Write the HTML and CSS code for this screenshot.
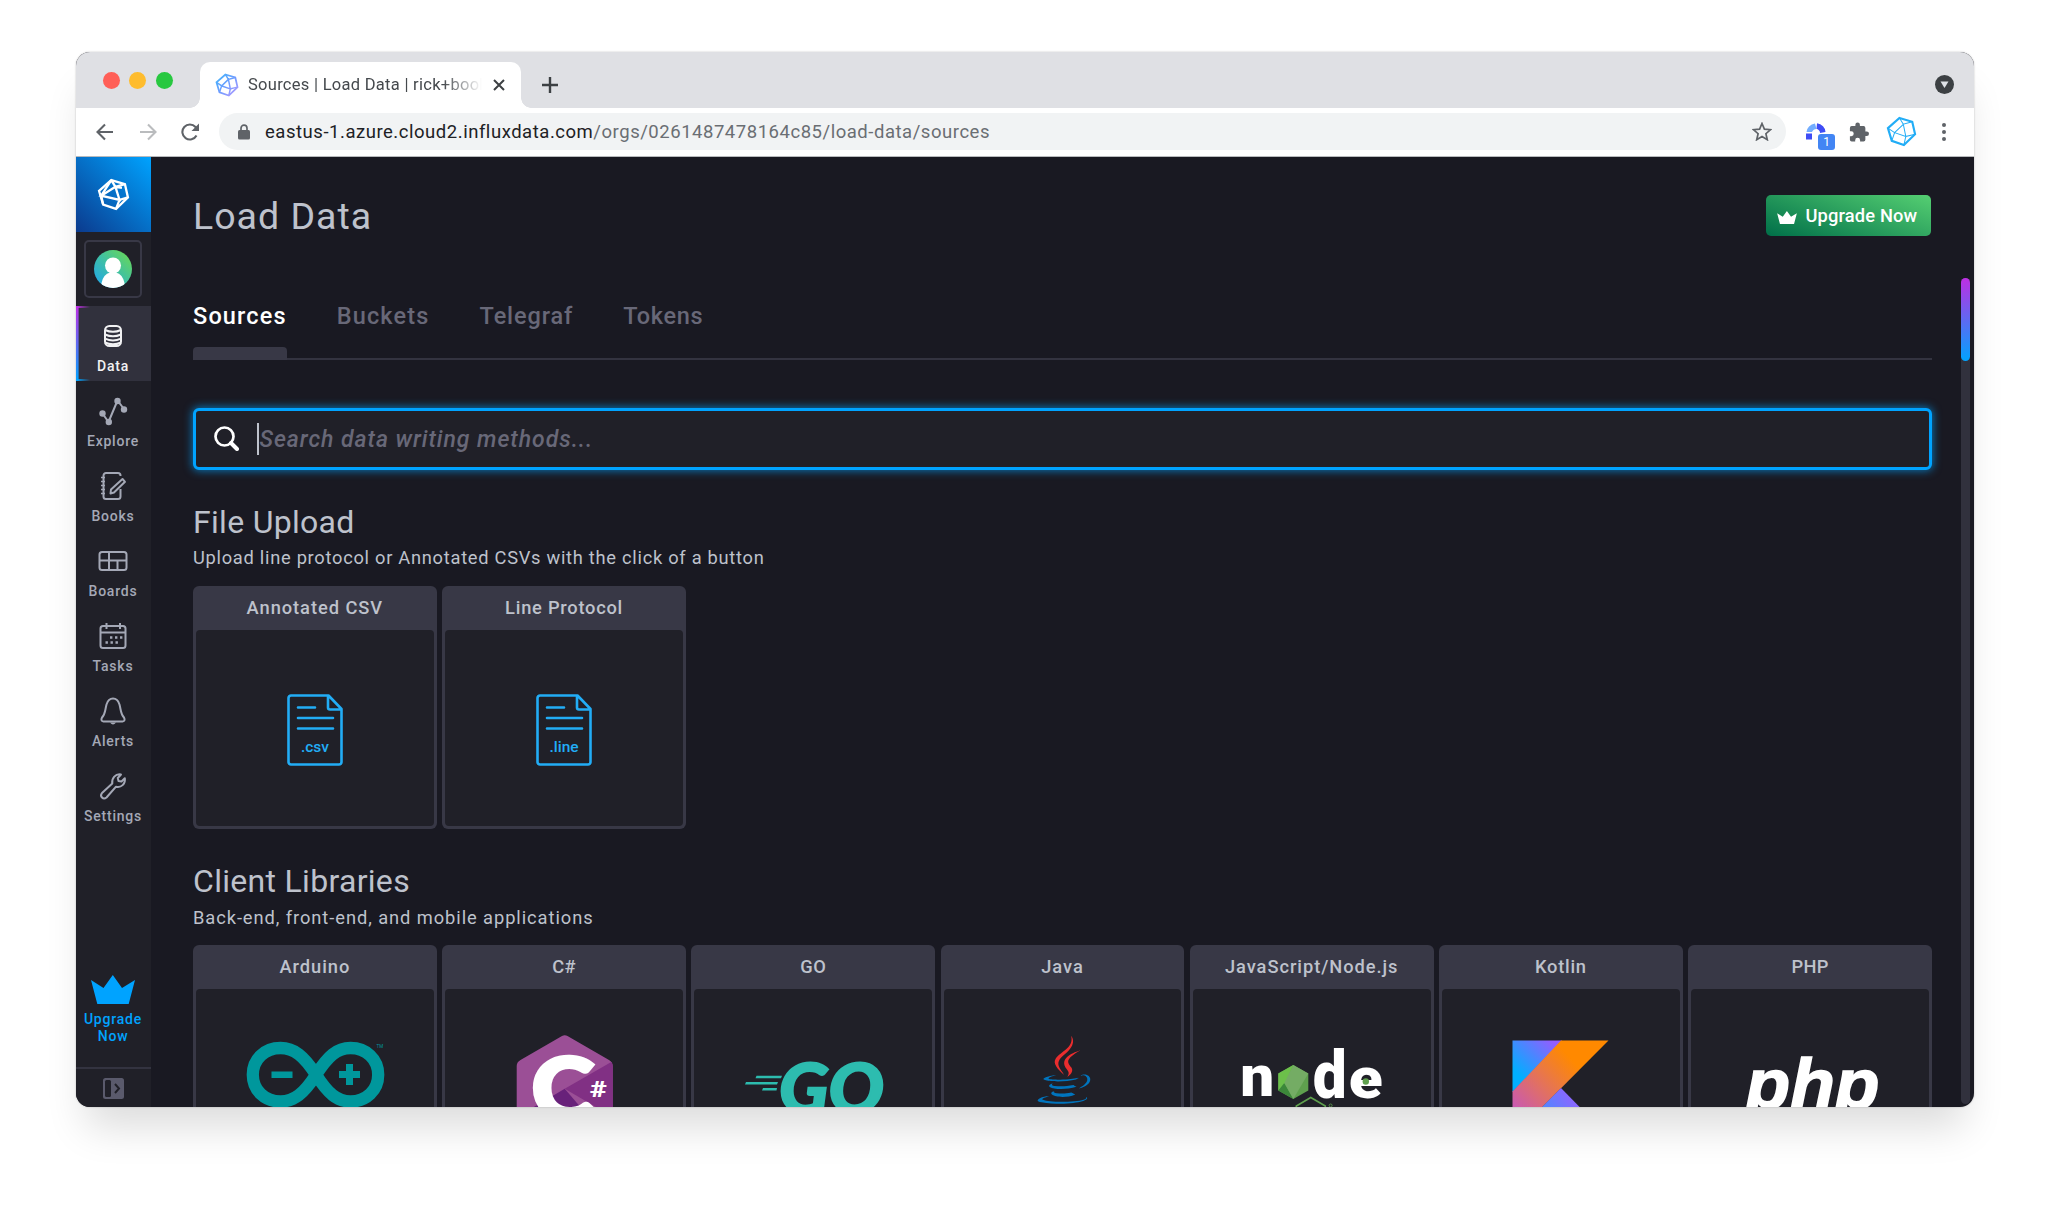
FILE: index.html
```html
<!DOCTYPE html>
<html lang="en">
<head>
<meta charset="utf-8">
<title>Sources | Load Data</title>
<link rel="stylesheet" href="styles.css">
</head>
<body>
<svg width="0" height="0" class="defs">
  <defs>
    <linearGradient id="fav" x1="0" y1="0" x2="1" y2="1"><stop offset="0" stop-color="#3fb6fb"/><stop offset=".5" stop-color="#6f9cff"/><stop offset="1" stop-color="#b79bff"/></linearGradient>
    <linearGradient id="avatar" x1="0" y1="1" x2="1" y2="0"><stop offset="0" stop-color="#1da4f2"/><stop offset=".5" stop-color="#3fc0a4"/><stop offset="1" stop-color="#6fdc4b"/></linearGradient>
    <symbol id="influx" viewBox="-1.7 -1.7 27.4 27.4">
      <path d="M10.2 0 21.5 3.4 24 14.4 14.1 24 3.4 20.3 0 9Z" class="outer"/>
      <path d="M13.6 5.6 5.9 13 15.8 16.4ZM10.2 0 13.6 5.6 21.5 3.4M0 9 5.9 13 3.4 20.3M24 14.4 15.8 16.4 14.1 24" class="inner"/>
    </symbol>
    <symbol id="influx-solid" viewBox="-1.7 -1.7 27.4 27.4">
      <path d="M10.2 0 21.5 3.4 24 14.4 14.1 24 3.4 20.3 0 9Z"/>
      <path d="M13.600 5.600 1.800 13 17 16.500ZM10.200 0 1.800 13M10.200 0 13.600 5.600 21.500 3.400M3.400 20.300 1.800 13M24 14.400 17 16.500 14.100 24M13.600 5.600 19 6.500"/>
    </symbol>
    <symbol id="crown" viewBox="0 0 44 29"><path d="M0 5 12.5 13 21.8 0 31 13 44 5 37.7 29H6.3Z"/></symbol>
    <symbol id="doc" viewBox="0 0 56 72"><path d="M4 1.5H41.500L54.500 15V68a2.500 2.500 0 0 1-2.500 2.500H4A2.500 2.500 0 0 1 1.500 68V4A2.500 2.500 0 0 1 4 1.500ZM41 1.500V13.500a2 2 0 0 0 2 2H54.500M11 13.500H28M11 24H46M11 34.500H46"/></symbol>
  </defs>
</svg>

<div class="window">
  <div class="tabstrip">
    <div class="lights"><i class="red"></i><i class="yellow"></i><i class="green"></i></div>
    <div class="tab">
      <svg class="favicon"><use href="#influx"/></svg>
      <span class="tab-title">Sources | Load Data | rick+book</span>
      <svg class="close" viewBox="0 0 12 12"><path d="M1 1 11 11M11 1 1 11"/></svg>
    </div>
    <svg class="plus" viewBox="0 0 16 16"><path d="M8 0V16M0 8H16"/></svg>
    <svg class="drop" viewBox="0 0 19 19"><circle cx="9.500" cy="9.500" r="9.500" fill="#3c4043"/><path d="M5.500 6.500H13.500L9.500 13Z" fill="#dee1e6"/></svg>
  </div>

  <div class="toolbar">
    <div class="nav">
      <svg viewBox="0 0 18 18"><path d="M17 9H1.500M9 1.500 1.500 9 9 16.500"/></svg>
      <svg viewBox="0 0 18 18" class="off"><path d="M1 9H16.500M9 1.500 16.500 9 9 16.500"/></svg>
      <svg viewBox="0 0 18 18"><path d="M15.500 12.500A7.500 7.500 0 1 1 14.500 4L16.500 6"/><path d="M18 .5V8H10.500Z" class="tip"/></svg>
    </div>
    <div class="omnibox">
      <svg class="lock" viewBox="0 0 12 16"><path d="M3 7V4.200a3 3 0 0 1 6 0V7" fill="none" stroke="#5f6368" stroke-width="1.700"/><rect y="6" width="12" height="9.500" rx="1.500" fill="#5f6368"/></svg>
      <span class="url"><b>eastus-1.azure.cloud2.influxdata.com</b>/orgs/0261487478164c85/load-data/sources</span>
      <svg class="star" viewBox="0 0 20 19"><path d="M10 1.500 12.400 7.200 18.600 7.700 13.900 11.700 15.300 17.700 10 14.500 4.700 17.700 6.100 11.700 1.400 7.700 7.600 7.200Z"/></svg>
    </div>
    <div class="extensions">
      <div class="ext">
        <svg viewBox="0 0 20 17"><path d="M.5 9A10 9 0 0 1 9 .5L10.500 6A5 5 0 0 0 6 9Z" fill="#72adff"/><path d="M11 .3A10 9 0 0 1 19.500 9L14 10Q14 7 10.500 5.800Z" fill="#3f4df5"/><path d="M0 10.500H6V16.500H0Z" fill="#3f4df5"/></svg>
        <span class="badge">1</span>
      </div>
      <svg class="puzzle" viewBox="1 1 22 21"><path d="M20.500 11H19V7a2 2 0 0 0-2-2h-4V3.500a2.500 2.500 0 0 0-5 0V5H4a2 2 0 0 0-2 2v3.800h1.500a2.700 2.700 0 0 1 0 5.400H2V20a2 2 0 0 0 2 2h3.800v-1.500a2.700 2.700 0 0 1 5.400 0V22H17a2 2 0 0 0 2-2v-4h1.500a2.500 2.500 0 0 0 0-5z"/></svg>
      <svg class="profile"><use href="#influx"/></svg>
      <svg class="dots" viewBox="0 0 4 18"><circle cx="2" cy="2" r="2"/><circle cx="2" cy="9" r="2"/><circle cx="2" cy="16" r="2"/></svg>
    </div>
  </div>

  <div class="app">
    <nav class="sidebar">
      <div class="brand"><svg><use href="#influx-solid"/></svg></div>
      <div class="account"><div class="account-box">
        <svg viewBox="0 0 38 38"><clipPath id="round"><circle cx="19" cy="19" r="19"/></clipPath><g clip-path="url(#round)"><rect width="38" height="38" fill="url(#avatar)"/><circle cx="19" cy="15.500" r="8" fill="#fff"/><path d="M7.500 38V33Q9.500 24 16 22.500H22Q28.500 24 30.500 33V38Z" fill="#fff"/></g></svg>
      </div></div>
      <a class="item active"><svg viewBox="0 0 30 30"><rect x="7" y="5" width="16" height="20" rx="4.500"/><path d="M7 9Q15 12.500 23 9M7 13.500Q15 17 23 13.500M7 17.700Q15 21.200 23 17.700M7 21.500Q15 25 23 21.500"/></svg><span>Data</span></a>
      <a class="item"><svg viewBox="0 0 30 30"><path d="M4.500 17.500 10.500 26 19.500 4.500 26 13" stroke-width="2"/><g class="solid"><circle cx="4.500" cy="17.500" r="3.200"/><circle cx="10.800" cy="26" r="3.200"/><circle cx="19.500" cy="5" r="3.200"/><circle cx="26" cy="13.500" r="3.200"/></g></svg><span>Explore</span></a>
      <a class="item"><svg viewBox="0 0 30 30"><path d="M22.500 5V4.500A2.500 2.500 0 0 0 20 2H8A2.500 2.500 0 0 0 5.500 4.500V25.500A2.500 2.500 0 0 0 8 28H20A2.500 2.500 0 0 0 22.500 25.500V18"/><path d="M24.500 8 27 10.800 16 21.500 12.500 22.500 13 18.500Z"/><path d="M3 6.500H7M3 10.500H7M3 14.500H7M3 18.500H7M3 22.500H7" stroke-width="1.500"/></svg><span>Books</span></a>
      <a class="item"><svg viewBox="0 0 30 30"><rect x="1.500" y="6" width="27" height="18" rx="2.500"/><path d="M1.500 14.500H28.500M11 6V24M19.500 14.500V24"/></svg><span>Boards</span></a>
      <a class="item"><svg viewBox="0 0 30 30"><rect x="2.500" y="5" width="25" height="22" rx="2.500"/><path d="M2.500 11.500H27.500M8.500 2V8M22 2V8"/><path d="M12 16.500H24.500M7.500 21.500H20" stroke-width="2.400" stroke-dasharray="2.400 2.600"/></svg><span>Tasks</span></a>
      <a class="item"><svg viewBox="0 0 30 30"><path d="M5.500 25.500Q2.300 25 4 21.500C7.500 18 7 14 8.500 8.500Q10.300 2.500 15 2.500T21.500 8.500C23 14 22.500 18 26 21.500Q27.700 25 24.500 25.500Z"/><path d="M12 26.500Q15 30.500 18 26.500Z" class="solid"/></svg><span>Alerts</span></a>
      <a class="item"><svg viewBox="0 0 30 30"><path d="M4 22 14.300 12.500C13.500 7 17.500 2.500 23 3.500L19.800 7 20.500 10 23.500 10.500 26.800 7.200C27.800 13 23 17 18 15.700L8.500 26.500Q6 28.500 4 26.500T4 22Z"/></svg><span>Settings</span></a>
      <div class="upgrade"><svg><use href="#crown"/></svg><span>Upgrade<br>Now</span></div>
      <div class="collapse"><svg viewBox="0 0 21 21"><rect width="21" height="21" rx="2.500" fill="#5a5a6c"/><rect x="2" y="2" width="6" height="17" rx="1.500" fill="#202028"/><path d="M12 6 16 10.500 12 15" fill="none" stroke="#202028" stroke-width="2"/></svg></div>
    </nav>

    <main class="page">
      <header class="head">
        <h1>Load Data</h1>
        <button class="cta"><svg><use href="#crown"/></svg><span>Upgrade Now</span></button>
      </header>
      <div class="tabs">
        <a class="t on">Sources</a><a class="t">Buckets</a><a class="t t3">Telegraf</a><a class="t t4">Tokens</a>
      </div>
      <div class="search">
        <svg viewBox="0 0 25 25"><circle cx="10.500" cy="10.500" r="9"/><path d="M17 17 23 23" stroke-width="4"/></svg>
        <i class="caret"></i><span>Search data writing methods...</span>
      </div>

      <section>
        <h2>File Upload</h2>
        <p>Upload line protocol or Annotated CSVs with the click of a button</p>
        <div class="cards">
          <article class="card"><h3>Annotated CSV</h3><div class="art file"><svg viewBox="0 0 56 72"><use href="#doc" class="doc"/><text x="28" y="58">.csv</text></svg></div></article>
          <article class="card"><h3 class="snug">Line Protocol</h3><div class="art file"><svg viewBox="0 0 56 72"><use href="#doc" class="doc"/><text x="28" y="58">.line</text></svg></div></article>
        </div>
      </section>

      <section>
        <h2>Client Libraries</h2>
        <p class="wide">Back-end, front-end, and mobile applications</p>
        <div class="cards">
          <article class="card"><h3>Arduino</h3><div class="art">
            <svg viewBox="196 989 238 197"><g fill="none" stroke="#00979c" stroke-width="12.300"><path d="M316 1074.800C304 1056 294 1048 280.500 1048C265 1048 252.800 1059 252.800 1074.800S265 1101.500 280.500 1101.500C294 1101.500 304 1093.500 316 1074.800S337 1048 350.500 1048C366 1048 378.200 1059 378.200 1074.800S366 1101.500 350.500 1101.500C337 1101.500 328 1093.500 316 1074.800Z"/></g><path d="M271.500 1071.500h21v6.500h-21ZM339 1071h7v-7h7v7h7v7h-7v7h-7v-7h-7Z" fill="#00979c"/><text x="376.500" y="1048" font-size="4.500" fill="#00979c">TM</text></svg></div></article>
          <article class="card"><h3 class="tight">C#</h3><div class="art">
            <svg viewBox="445 989 238 197"><clipPath id="hex"><path d="M562 1036Q564.700 1034.500 567.500 1036L609 1060Q612.700 1062 612.700 1066V1111Q612.700 1115 609 1117L567.500 1141.500Q564.700 1143 562 1141.500L520.500 1117Q516.700 1115 516.700 1111V1066Q516.700 1062 520.500 1060Z"/></clipPath><g clip-path="url(#hex)"><path d="M510 1030H620V1150H510Z" fill="#9b4f96"/><path d="M564.700 1088.700 517 1117V1145H613Z" fill="#68217a"/><path d="M564.700 1088.700 613 1061V1117Z" fill="#813084"/></g><text x="531.500" y="1119" class="csharp" textLength="63" lengthAdjust="spacingAndGlyphs">C</text><text x="590" y="1096.500" class="hash" textLength="17" lengthAdjust="spacingAndGlyphs">#</text></svg></div></article>
          <article class="card"><h3 class="tight">GO</h3><div class="art">
            <svg viewBox="694 989 238 197"><g fill="#2dbcaf"><path d="M756.500 1075.800H782L781 1078.200H755.500ZM746 1082H778L777 1084.500H745ZM763 1088H777L776.500 1090.500H762Z"/><text x="779" y="1113" class="go" textLength="105" lengthAdjust="spacingAndGlyphs">GO</text></g></svg></div></article>
          <article class="card"><h3>Java</h3><div class="art">
            <svg viewBox="943.500 989 238 197"><g transform="translate(1027 1035) scale(.571)"><path fill="#0074bd" d="M47.617 98.120s-4.767 2.774 3.397 3.710c9.892 1.130 14.947.968 25.845-1.092 0 0 2.871 1.795 6.873 3.351-24.439 10.470-55.308-.607-36.115-5.969zm-2.988-13.665s-5.348 3.959 2.823 4.805c10.567 1.091 18.910 1.180 33.354-1.600 0 0 1.993 2.025 5.132 3.131-29.542 8.640-62.446.680-41.309-6.336z"/><path fill="#ea2d2e" d="M69.802 61.271c6.025 6.935-1.580 13.170-1.580 13.170s15.289-7.891 8.269-17.777c-6.559-9.215-11.587-13.792 15.635-29.580 0 0-42.731 10.670-22.324 34.187z"/><path fill="#0074bd" d="M102.123 108.229s3.529 2.910-3.888 5.159c-14.102 4.272-58.706 5.560-71.094.171-4.451-1.938 3.899-4.625 6.526-5.192 2.739-.593 4.303-.485 4.303-.485-4.953-3.487-32.013 6.850-13.743 9.815 49.821 8.076 90.817-3.637 77.896-9.468zM49.912 70.294s-22.686 5.389-8.033 7.348c6.188.828 18.518.638 30.011-.326 9.390-.789 18.813-2.474 18.813-2.474s-3.308 1.419-5.704 3.053c-23.042 6.061-67.544 3.238-54.731-2.958 10.832-5.239 19.644-4.643 19.644-4.643zm40.697 22.747c23.421-12.167 12.591-23.860 5.032-22.285-1.848.385-2.677.720-2.677.720s.688-1.079 2-1.543c14.953-5.255 26.451 15.503-4.823 23.725 0-.002.359-.327.468-.617z"/><path fill="#ea2d2e" d="M76.491 1.587S89.459 14.563 64.188 34.510c-20.266 16.006-4.621 25.130-.007 35.559-11.831-10.673-20.509-20.070-14.688-28.815C58.041 28.420 81.722 22.195 76.491 1.587z"/></g></svg></div></article>
          <article class="card"><h3>JavaScript/Node.js</h3><div class="art">
            <svg viewBox="1192.700 989 238 197"><g class="node"><text x="1240" y="1096" textLength="34" lengthAdjust="spacingAndGlyphs">n</text><text x="1312.500" y="1098" textLength="34" lengthAdjust="spacingAndGlyphs" class="tall">d</text><text x="1348.500" y="1098" textLength="34" lengthAdjust="spacingAndGlyphs">e</text></g><path d="M1293 1065 1308 1073.500V1090.500L1293 1099 1278 1090.500V1073.500Z" fill="#5fa04e"/><path d="M1293 1065 1278 1073.500V1090.500L1284 1085Z" fill="#6cc04a"/><path d="M1278 1090.500 1284 1083 1293 1099Z" fill="#3c873a"/><path d="M1293 1065 1308 1073.500 1293 1099 1284 1083Z" fill="#74ac64"/><path d="M1296 1120V1106L1310.500 1097.500 1325 1106V1120" fill="none" stroke="#5fa04e" stroke-width="1.600"/><circle cx="1330.300" cy="1105.500" r="1.500" fill="none" stroke="#5fa04e" stroke-width=".8"/><circle cx="1365.500" cy="1081.500" r="3.200" fill="#5fa04e"/></svg></div></article>
          <article class="card"><h3 class="snug">Kotlin</h3><div class="art">
            <svg viewBox="1442 989 238 197"><defs><linearGradient id="kb" gradientUnits="userSpaceOnUse" x1="1518" y1="1082" x2="1556" y2="1044"><stop offset=".1" stop-color="#00afff"/><stop offset=".6" stop-color="#5282ff"/><stop offset="1" stop-color="#945dff"/></linearGradient><linearGradient id="ko" gradientUnits="userSpaceOnUse" x1="1512" y1="1112" x2="1590" y2="1040"><stop offset="0" stop-color="#c757bc"/><stop offset=".14" stop-color="#d0609a"/><stop offset=".5" stop-color="#ec7a3f"/><stop offset=".75" stop-color="#ff8900"/></linearGradient><linearGradient id="kp" gradientUnits="userSpaceOnUse" x1="1535" y1="1115" x2="1567" y2="1090"><stop offset="0" stop-color="#3b92ff"/><stop offset="1" stop-color="#8c66ff"/></linearGradient></defs><path d="M1512.500 1040.500H1562L1512.500 1092Z" fill="url(#kb)"/><path d="M1561 1040.500H1608.500L1512.500 1137V1091.500Z" fill="url(#ko)"/><path d="M1561 1088 1609 1137H1512.500Z" fill="url(#kp)"/></svg></div></article>
          <article class="card"><h3 class="tight">PHP</h3><div class="art">
            <svg viewBox="1691 989 238 197"><text x="1745.500" y="1108" class="php" textLength="134" lengthAdjust="spacingAndGlyphs">php</text></svg></div></article>
        </div>
      </section>
      <div class="scroll"><i></i></div>
    </main>
  </div>
</div>
</body>
</html>
```
FILE: styles.css
```css
:root { --thin: 1.7; }
* { box-sizing: border-box; }
body { margin: 0; background: #fff; font-family: Roboto, sans-serif; width: 2049px; height: 1207px; overflow: hidden; padding: 52px 0 0 75.500px; }
h1, h2, h3, p { margin: 0; font-weight: 400; }
svg { display: block; flex: none; }
.defs { position: absolute; }

.window { width: 1898px; height: 1055px; border-radius: 14px; overflow: hidden; display: flex; flex-direction: column; background: #191922; box-shadow: 0 30px 40px -10px rgba(0,0,0,.14), 0 0 2px rgba(0,0,0,.25); }

/* browser chrome */
.tabstrip { height: 55.500px; background: #dee1e6; background: #dfe0e4; display: flex; flex: none; align-items: flex-end; }
.lights { display: flex; gap: 9.700px; padding: 0 25px 19px 27px; width: 124px; }
.lights i { width: 17px; height: 17px; border-radius: 50%; flex: none; }
.red { background: #ff5f57; }
.yellow { background: #febc2e; }
.green { background: #28c840; }
.tab { width: 321px; height: 45.500px; background: #fff; border-radius: 10px 10px 0 0; display: flex; align-items: center; padding: 0 15px; position: relative; }
.tab::before, .tab::after { content: ""; position: absolute; bottom: 0; width: 10px; height: 10px; }
.tab::before { left: -10px; background: radial-gradient(circle at 0 0, #dfe0e4 9.500px, #fff 10px); }
.tab::after { right: -10px; background: radial-gradient(circle at 100% 0, #dfe0e4 9.500px, #fff 10px); }
.favicon { width: 24px; height: 24px; fill: none; stroke: url(#fav); stroke-width: 2; margin-right: 9.500px; }
.tab-title { width: 234px; overflow: hidden; white-space: nowrap; font-size: 16.500px; letter-spacing: .28px; color: #45494d; -webkit-mask-image: linear-gradient(90deg, #000 195px, transparent 234px); mask-image: linear-gradient(90deg, #000 195px, transparent 234px); }
.close { width: 12px; height: 12px; margin-left: 11px; stroke: #3c4043; stroke-width: 2; }
.plus { width: 16px; height: 16px; margin: 0 0 15px 21px; stroke: #3c4043; stroke-width: 2.400; }
.drop { width: 19px; height: 19px; margin: 0 20px 13.500px auto; }
.toolbar { height: 49.500px; background: #fff; border-bottom: 1.500px solid #b8babd; flex: none; display: flex; align-items: center; }
.nav { display: flex; gap: 24.700px; padding-left: 20.500px; width: 143.500px; }
.nav svg { width: 18px; height: 18px; fill: none; stroke: #5f6368; stroke-width: 2.100; }
.nav .off { stroke: #babcbe; }
.nav .tip { fill: #5f6368; stroke: none; }
.omnibox { width: 1567px; height: 37px; border-radius: 19px; background: #f1f3f4; display: flex; align-items: center; padding: 0 14px 0 19px; }
.lock { width: 12px; height: 16px; margin-right: 15px; }
.url { font-size: 18.500px; letter-spacing: .53px; color: #6a6e73; white-space: nowrap; }
.url b { font-weight: 400; color: #202124; }
.star { width: 20px; height: 19px; margin-left: auto; fill: none; stroke: #5f6368; stroke-width: 1.700; }
.extensions { display: flex; align-items: center; padding-left: 20px; }
.ext { position: relative; width: 20px; height: 17px; margin-right: 23px; }
.badge { position: absolute; left: 12px; top: 11px; width: 17px; height: 16px; border-radius: 3px; background: #4285f4; color: #fff; font-size: 12px; line-height: 17px; text-align: center; }
.puzzle { width: 20px; height: 20px; fill: #5f6368; margin-right: 17px; }
.profile { --thin: .9; width: 31px; height: 31px; fill: none; stroke: #22adf6; stroke-width: 1.900; margin-right: 25px; }
.favicon .inner, .inner { stroke-width: var(--thin); }
.dots { width: 4px; height: 18px; fill: #5f6368; }

/* app */
.app { flex: 1; display: flex; min-height: 0; }
.sidebar { width: 75px; background: #202028; display: flex; flex-direction: column; flex: none; }
.brand { height: 74.500px; background: linear-gradient(45deg, #0b3a8d, #00a3ff); display: flex; align-items: center; justify-content: center; }
.brand svg { width: 33px; height: 33px; fill: none; stroke: #fff; stroke-width: 1.900; }
.account { height: 74.500px; display: flex; align-items: center; justify-content: center; }
.account-box { width: 58.500px; height: 58.500px; border: 2.600px solid #383846; border-radius: 5px; display: flex; align-items: center; justify-content: center; }
.account-box svg { width: 38px; height: 38px; }
.item { height: 75px; padding-top: 15px; display: flex; flex-direction: column; align-items: center; color: #a4a8b6; font-size: 14px; font-weight: 500; letter-spacing: .78px; line-height: 20px; position: relative; }
.item svg { width: 30px; height: 30px; margin-bottom: 5px; fill: none; stroke: currentColor; stroke-width: 2; stroke-linejoin: round; }
.item .solid { fill: currentColor; stroke: none; }
.active { background: #31313d; color: #f1f1f3; }
.active::before { content: ""; position: absolute; left: 0; top: 0; width: 14px; height: 75px; background: linear-gradient(90deg, #be2ee4, transparent) 0 0 / 14px 2px no-repeat, linear-gradient(90deg, #00a3ff, transparent) 0 100% / 14px 2px no-repeat, linear-gradient(#be2ee4, #00a3ff) 0 0 / 2.600px 75px no-repeat; }
.upgrade { margin-top: auto; display: flex; flex-direction: column; align-items: center; height: 92px; color: #00a3ff; font-size: 14px; font-weight: 500; letter-spacing: .8px; line-height: 17.300px; text-align: center; }
.upgrade svg { width: 44px; height: 29px; fill: #00a3ff; margin-bottom: 7px; }
.collapse { height: 40px; border-top: 2.500px solid #333340; display: flex; justify-content: center; padding-top: 9px; }
.collapse svg { width: 21px; height: 21px; }

.page { flex: 1; min-width: 0; padding: 38px 41.500px 0 42.500px; overflow: hidden; position: relative; color: #bec2cc; }
.head { height: 41px; display: flex; align-items: center; justify-content: space-between; }
h1 { font-size: 37.500px; line-height: 41px; padding-top: 2px; letter-spacing: 1px; }
.cta { width: 165px; height: 41px; margin-right: 1.500px; border: 0; border-radius: 5px; background: linear-gradient(20deg, #006f49, #55cf72); display: flex; align-items: center; padding: 0 0 0 11px; color: #fff; font: 500 18.300px Roboto, sans-serif; letter-spacing: .15px; }
.cta svg { width: 20px; height: 13px; fill: #fff; margin: 3px 9px 0 0; }
.tabs { margin-top: 60px; height: 64px; border-bottom: 2.600px solid #333340; display: flex; gap: 50px; }
.t { height: 64px; font-size: 23.500px; font-weight: 500; line-height: 40px; letter-spacing: 1.150px; color: #686878; display: flex; flex-direction: column; justify-content: space-between; }
.t3 { letter-spacing: .9px; }
.t4 { letter-spacing: .7px; }
.on { color: #fff; }
.on::after { content: ""; height: 13.500px; background: #383846; border-radius: 4px 4px 0 0; }
.search { margin-top: 48px; height: 61.500px; border: 3px solid #00a3ff; border-radius: 6px; background: #202028; box-shadow: 0 0 8px 1px rgba(0,163,255,.65); display: flex; align-items: center; padding-left: 18px; font-size: 23px; font-weight: 500; font-style: italic; letter-spacing: .95px; color: #686878; }
.search svg { width: 25px; height: 25px; fill: none; stroke: #fff; stroke-width: 2.700; stroke-linecap: round; }
.search span { padding-top: 2px; }
.caret { width: 1.500px; height: 32px; background: #bec2cc; margin: 0 1px 0 18px; }
section { padding-top: 32px; }
h2 { font-size: 32px; line-height: 40px; letter-spacing: .3px; }
p { font-size: 18.300px; line-height: 28px; margin-top: 2.500px; letter-spacing: .72px; white-space: nowrap; }
.wide { letter-spacing: .93px; }
.cards { margin-top: 13.700px; display: grid; grid-template-columns: repeat(7, minmax(0, 1fr)); gap: 5.500px; }
.card { height: 243.500px; background: #383846; border-radius: 6px; padding: 0 3px 3px; display: flex; flex-direction: column; }
h3 { height: 44px; line-height: 44px; font-size: 18.300px; font-weight: 500; letter-spacing: .95px; text-align: center; white-space: nowrap; }
.snug { letter-spacing: .75px; }
.tight { letter-spacing: .4px; }
.art { flex: 1; background: #202028; border-radius: 4px; overflow: hidden; display: flex; align-items: center; justify-content: center; }
.art > svg { width: 238px; height: 197px; }
.art.file > svg { width: 56px; height: 72px; margin-top: 4px; fill: none; }
.doc { stroke: #22adf6; stroke-width: 2.600; stroke-linecap: round; stroke-linejoin: round; }
.file text { fill: #22adf6; font-size: 15.500px; font-weight: 500; text-anchor: middle; }
.csharp { font: 900 86px Lato, sans-serif; fill: #fff; stroke: #fff; stroke-width: 3.500; }
.hash { font: 900 22px Roboto, sans-serif; fill: #fff; }
.go { font: italic 900 68px Lato, sans-serif; stroke: #2dbcaf; stroke-width: 2; }
.node { font: 900 58px Roboto, sans-serif; fill: #fff; }
.tall { font-size: 66px; }
.php { font: italic 700 71px "Liberation Sans", sans-serif; fill: #fff; stroke: #fff; stroke-width: 1.500; }
.scroll { position: absolute; right: 4px; top: 121px; width: 8.500px; height: 826px; border-radius: 5px; background: #31313d; }
.scroll i { display: block; height: 83px; border-radius: 5px; background: linear-gradient(#be2ee4, #00a3ff); }
```
